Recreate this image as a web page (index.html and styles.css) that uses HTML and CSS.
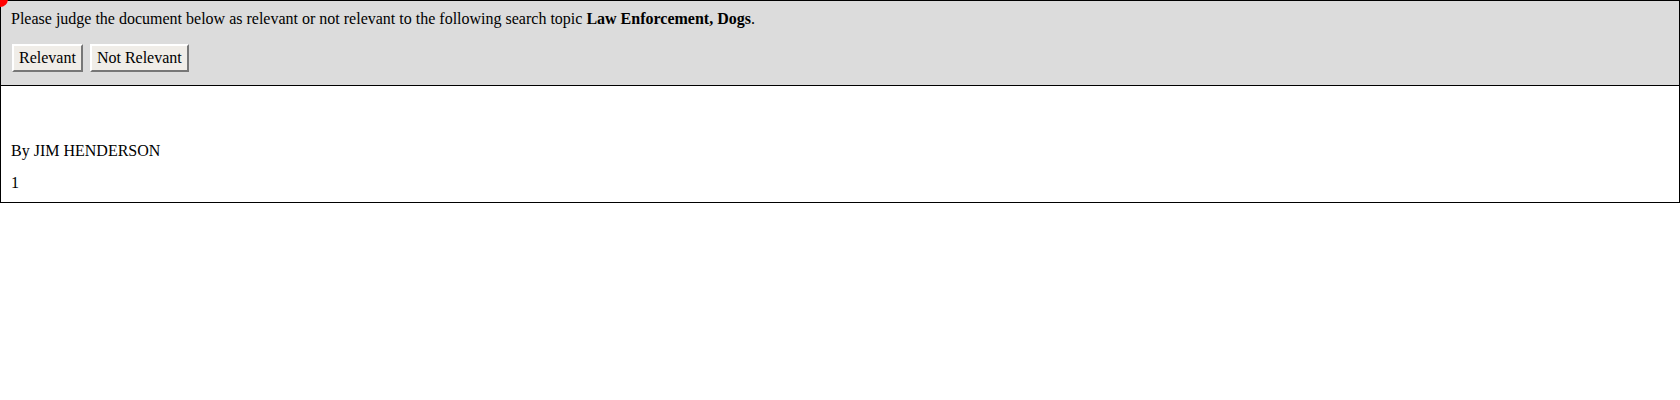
FILE: index.html
```html
<!DOCTYPE html>
<html>
<head>
<meta charset="utf-8">
<link rel="stylesheet" href="styles.css">
</head>
<body>
<div class="dot"></div>
<div class="judge">
  <div class="prompt">Please judge the document below as relevant or not relevant to the following search topic <b>Law Enforcement, Dogs</b>.</div>
  <div class="actions">
    <button class="btn">Relevant</button>
    <button class="btn">Not Relevant</button>
  </div>
</div>
<div class="doc">
  <div class="line">By JIM HENDERSON</div>
  <div class="line">1</div>
</div>
</body>
</html>
```
FILE: styles.css
```css
html, body {
  margin: 0;
  padding: 0;
  background: #fff;
}
body {
  font-family: "Liberation Serif", "Times New Roman", serif;
  font-size: 16px;
  color: #000;
  position: relative;
}
.dot {
  position: absolute;
  left: -8px;
  top: -9px;
  width: 16px;
  height: 16px;
  border-radius: 50%;
  background: #f00;
  z-index: 2;
}
.judge {
  background: #dcdcdc;
  border: 1px solid #000;
  padding: 9px 10px 13px;
}
.prompt {
  line-height: 18px;
}
.actions {
  margin-top: 16px;
  display: flex;
  gap: 7px;
  padding-left: 1px;
}
.btn {
  font-family: "Liberation Serif", "Times New Roman", serif;
  font-size: 16px;
  color: #000;
  background: #f0ede8;
  border: 2px solid;
  border-top-color: #fff;
  border-left-color: #fff;
  border-right-color: #777;
  border-bottom-color: #777;
  padding: 3px 5px;
  height: 28px;
  line-height: 18px;
  margin: 0;
}
.doc {
  border: 1px solid #000;
  border-top: none;
  padding: 56px 10px 10px;
}
.line {
  line-height: 18px;
}
.line + .line {
  margin-top: 14px;
}
```
